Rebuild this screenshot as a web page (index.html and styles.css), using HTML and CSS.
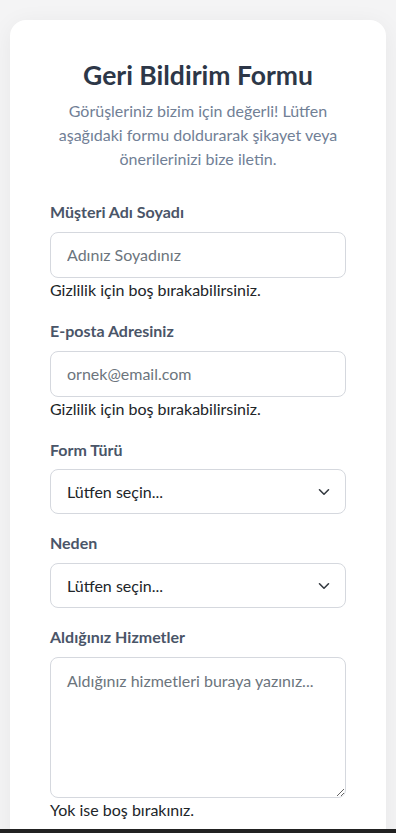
FILE: index.html
```html
<!DOCTYPE html>
<html lang="tr">
<head>
<meta charset="utf-8">
<meta name="viewport" content="width=device-width, initial-scale=1">
<title>Geri Bildirim Formu</title>
<link rel="stylesheet" href="styles.css">
</head>
<body>
<main class="page">
  <section class="card">
    <header class="card-header">
      <h1 class="title">Geri Bildirim Formu</h1>
      <p class="subtitle">Görüşleriniz bizim için değerli! Lütfen aşağıdaki formu doldurarak şikayet veya önerilerinizi bize iletin.</p>
    </header>
    <form class="form">
      <div class="group">
        <label class="label" for="ad">Müşteri Adı Soyadı</label>
        <input class="control" id="ad" type="text" placeholder="Adınız Soyadınız">
        <div class="help">Gizlilik için boş bırakabilirsiniz.</div>
      </div>
      <div class="group">
        <label class="label" for="eposta">E-posta Adresiniz</label>
        <input class="control" id="eposta" type="email" placeholder="ornek@email.com">
        <div class="help">Gizlilik için boş bırakabilirsiniz.</div>
      </div>
      <div class="group">
        <label class="label" for="tur">Form Türü</label>
        <div class="select-wrap">
          <select class="control select" id="tur">
            <option>Lütfen seçin...</option>
          </select>
          <svg class="chevron" width="12" height="8" viewBox="0 0 12 8" aria-hidden="true"><path d="M1.5 1.8 6 6.2l4.5-4.4" fill="none" stroke="#343a40" stroke-width="1.6" stroke-linecap="round" stroke-linejoin="round"/></svg>
        </div>
      </div>
      <div class="group">
        <label class="label" for="neden">Neden</label>
        <div class="select-wrap">
          <select class="control select" id="neden">
            <option>Lütfen seçin...</option>
          </select>
          <svg class="chevron" width="12" height="8" viewBox="0 0 12 8" aria-hidden="true"><path d="M1.5 1.8 6 6.2l4.5-4.4" fill="none" stroke="#343a40" stroke-width="1.6" stroke-linecap="round" stroke-linejoin="round"/></svg>
        </div>
      </div>
      <div class="group">
        <label class="label" for="hizmet">Aldığınız Hizmetler</label>
        <textarea class="control textarea" id="hizmet" placeholder="Aldığınız hizmetleri buraya yazınız..."></textarea>
        <div class="help">Yok ise boş bırakınız.</div>
      </div>
    </form>
  </section>
</main>
<div class="bottom-bar"></div>
</body>
</html>
```
FILE: styles.css
```css
* { box-sizing: border-box; }

html, body {
  margin: 0;
  padding: 0;
}

body {
  background: #f4f4f5;
  font-family: Lato, "Noto Sans", "Liberation Sans", sans-serif;
  color: #212529;
}

.page {
  padding: 20px 10px 40px;
}

.card {
  background: #ffffff;
  border-radius: 16px;
  box-shadow: 0 4px 24px rgba(0, 0, 0, 0.06);
  padding: 40px 40px 40px;
}

.card-header {
  text-align: center;
  margin-bottom: 30px;
}

.title {
  margin: 0 0 9px;
  font-size: 26.5px;
  line-height: 30px;
  font-weight: 700;
  color: #2d3748;
}

.subtitle {
  margin: 0;
  font-size: 16px;
  line-height: 24px;
  color: #718096;
}

.form {
  display: flex;
  flex-direction: column;
  gap: 18px;
}

.group {
  display: flex;
  flex-direction: column;
}

.label {
  font-size: 16px;
  line-height: 22.8px;
  font-weight: 700;
  color: #4a5568;
  margin-bottom: 8px;
}

.control {
  display: block;
  width: 100%;
  font-family: inherit;
  font-size: 16px;
  line-height: 24px;
  color: #212529;
  background: #ffffff;
  border: 1px solid #d5d8de;
  border-radius: 8px;
  padding: 10px 16px;
  outline: none;
  margin: 0;
}

.control::placeholder {
  color: #6c757d;
  opacity: 1;
}

.select-wrap {
  position: relative;
}

.select {
  -webkit-appearance: none;
  appearance: none;
  height: 45px;
  padding: 0 40px 0 16px;
  color: #212529;
}

.chevron {
  position: absolute;
  right: 16px;
  top: 19px;
  pointer-events: none;
}

.textarea {
  height: 141px;
  padding-top: 11px;
  resize: vertical;
}

.help {
  font-size: 16px;
  line-height: 24px;
  color: #212529;
}

.bottom-bar {
  position: fixed;
  left: 0;
  right: 0;
  bottom: 0;
  height: 4px;
  background: #222222;
}
```
